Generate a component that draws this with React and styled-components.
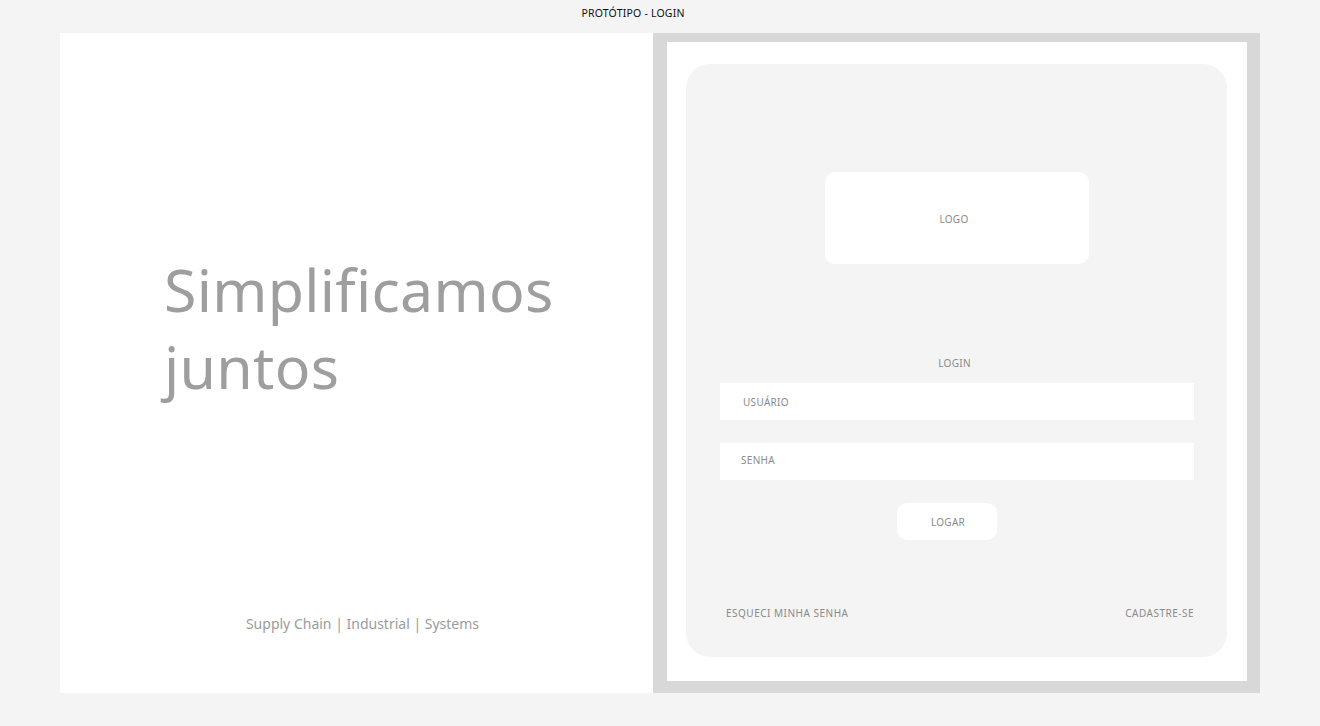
import styled, { createGlobalStyle } from "styled-components"

const GlobalStyle = createGlobalStyle`
  html, body {
    margin: 0;
    padding: 0;
    background: #f4f4f4;
    font-family: "Noto Sans", "Open Sans", sans-serif;
  }
`

const Page = styled.div`
  width: 1320px;
  height: 726px;
  display: flex;
  flex-direction: column;
  align-items: center;
  background: #f4f4f4;
`

const PageTitle = styled.div`
  height: 33px;
  display: flex;
  align-items: center;
  font-size: 10.5px;
  color: #111;
  letter-spacing: 0.2px;
  padding-right: 54px;
  padding-bottom: 7px;
  box-sizing: border-box;
`

const Frame = styled.div`
  width: 1200px;
  height: 660px;
  display: flex;
`

const Hero = styled.section`
  width: 593px;
  background: #fff;
  display: flex;
  flex-direction: column;
  padding: 218px 0 60px 104px;
  box-sizing: border-box;
`

const Headline = styled.h1`
  margin: 0;
  font-weight: 400;
  font-size: 59px;
  line-height: 77px;
  color: #9e9e9e;
  letter-spacing: 0.3px;
`

const Tagline = styled.p`
  margin: auto 0 0 -104px;
  text-align: center;
  font-size: 14px;
  color: #9b9b9b;
  padding-left: 12px;
`

const Side = styled.section`
  flex: 1;
  background: #d8d8d8;
  padding: 9px 13px 12px 14px;
  display: flex;
`

const Sheet = styled.div`
  flex: 1;
  background: #fff;
  padding: 22px 20px 24px 19px;
  display: flex;
`

const Card = styled.div`
  flex: 1;
  background: #f4f4f4;
  border-radius: 24px;
  display: flex;
  flex-direction: column;
  align-items: center;
  padding: 108px 33px 37px 34px;
`

const Logo = styled.div`
  width: 264px;
  height: 92px;
  background: #fff;
  border-radius: 10px;
  display: flex;
  align-items: center;
  justify-content: center;
  font-size: 10px;
  color: #8a8a8a;
  letter-spacing: 0.3px;
  margin-right: 1px;
  padding-right: 5px;
  padding-top: 2px;
  box-sizing: border-box;
`

const Label = styled.div`
  margin-top: 92px;
  margin-bottom: 13px;
  font-size: 10px;
  color: #8a8a8a;
  letter-spacing: 0.3px;
  padding-right: 5px;
`

const Field = styled.div`
  align-self: stretch;
  height: 37px;
  background: #fff;
  display: flex;
  align-items: center;
  padding-left: ${(p) => p.$indent}px;
  padding-bottom: ${(p) => p.$lift}px;
  box-sizing: border-box;
  margin-bottom: 23px;
  font-size: 10px;
  color: #8a8a8a;
  letter-spacing: 0.3px;
`

const Button = styled.button`
  width: 100px;
  height: 37px;
  border: none;
  border-radius: 10px;
  background: #fff;
  font-family: inherit;
  font-size: 10px;
  color: #8a8a8a;
  letter-spacing: 0.3px;
  margin-right: 21px;
  padding: 0 0 0 3px;
`

const Links = styled.div`
  margin-top: auto;
  align-self: stretch;
  display: flex;
  justify-content: space-between;
  padding-left: 6px;
  font-size: 10px;
  color: #8a8a8a;
  letter-spacing: 0.5px;
`

export default function App() {
  return (
    <>
      <GlobalStyle />
      <Page>
        <PageTitle>PROTÓTIPO - LOGIN</PageTitle>
        <Frame>
          <Hero>
            <Headline>
              Simplificamos
              <br />
              juntos
            </Headline>
            <Tagline>Supply Chain | Industrial | Systems</Tagline>
          </Hero>
          <Side>
            <Sheet>
              <Card>
                <Logo>LOGO</Logo>
                <Label>LOGIN</Label>
                <Field $indent={23} $lift={0}>USUÁRIO</Field>
                <Field $indent={21} $lift={3}>SENHA</Field>
                <Button>LOGAR</Button>
                <Links>
                  <span>ESQUECI MINHA SENHA</span>
                  <span>CADASTRE-SE</span>
                </Links>
              </Card>
            </Sheet>
          </Side>
        </Frame>
      </Page>
    </>
  )
}
